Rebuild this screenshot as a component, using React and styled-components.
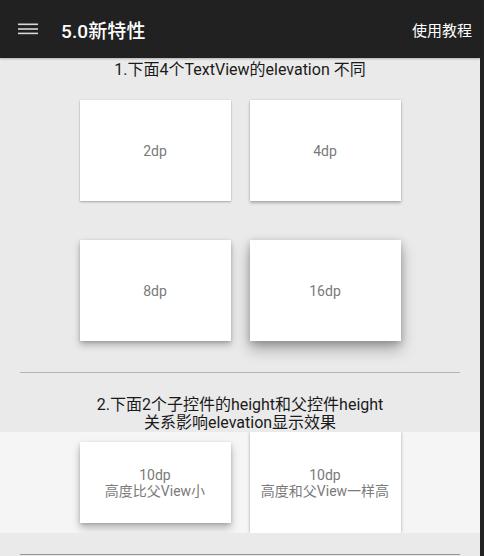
import React from "react";
import styled, { createGlobalStyle } from "styled-components";

const Global = createGlobalStyle`
  html, body { margin: 0; padding: 0; background: #222222; }
  body { font-family: Roboto, "Noto Sans CJK SC", sans-serif; }
  * { box-sizing: border-box; }
`;

const Page = styled.div`
  width: 480px;
  min-height: 100vh;
  background: #eaeaea;
  display: flex;
  flex-direction: column;
`;

const Toolbar = styled.header`
  height: 58px;
  background: #212121;
  display: flex;
  align-items: center;
  padding: 0 8px 0 18px;
  color: #ffffff;
  box-shadow: 0 1px 2px rgba(0, 0, 0, 0.25);
  position: relative;
  z-index: 1;
`;

const MenuIcon = styled.svg`
  width: 20px;
  height: 14px;
  flex: none;
`;

const Title = styled.h1`
  margin: 0 0 0 23px;
  font-size: 19px;
  font-weight: 500;
  flex: 1;
  letter-spacing: 0.1px;
`;

const Action = styled.span`
  font-size: 15px;
  font-weight: 400;
`;

const SectionTitle = styled.div`
  margin-top: ${(p) => p.$top}px;
  font-size: 16px;
  line-height: 18px;
  color: #1a1a1a;
  text-align: center;
`;

const CardGrid = styled.div`
  display: grid;
  grid-template-columns: 151px 151px;
  column-gap: 19px;
  row-gap: 39px;
  justify-content: center;
  margin-top: 21px;
`;

const shadows = {
  2: "0 1px 2px rgba(0,0,0,0.28), 0 0 1px rgba(0,0,0,0.12)",
  4: "0 2px 3px rgba(0,0,0,0.26), 0 0 2px rgba(0,0,0,0.14)",
  8: "0 4px 7px rgba(0,0,0,0.26), 0 1px 3px rgba(0,0,0,0.16)",
  10: "0 5px 8px rgba(0,0,0,0.26), 0 1px 3px rgba(0,0,0,0.16)",
  16: "0 8px 14px rgba(0,0,0,0.3), 0 2px 7px rgba(0,0,0,0.2)",
  side: "0 0 3px rgba(0,0,0,0.32)",
};

const Card = styled.div`
  background: #ffffff;
  height: ${(p) => (p.$h ? `${p.$h}px` : "auto")};
  align-self: ${(p) => (p.$stretch ? "stretch" : "center")};
  box-shadow: ${(p) => shadows[p.$elev]};
  display: flex;
  flex-direction: column;
  align-items: center;
  justify-content: center;
  color: #7a7a7a;
  font-size: 14px;
  line-height: 16px;
  text-align: center;
`;

const Divider = styled.div`
  height: 1px;
  margin: ${(p) => p.$top}px 20px 0;
  background: ${(p) => p.$color};
`;

const ParentView = styled.div`
  height: 101px;
  background: #f5f5f5;
  display: grid;
  grid-template-columns: 151px 151px;
  column-gap: 19px;
  justify-content: center;
  overflow: hidden;
`;

const Menu = () => (
  <MenuIcon viewBox="0 0 20 14">
    <rect x="0" y="1.5" width="20" height="1.6" fill="#d8d8d8" />
    <rect x="0" y="6.2" width="20" height="1.6" fill="#d8d8d8" />
    <rect x="0" y="10.6" width="20" height="1.6" fill="#d8d8d8" />
  </MenuIcon>
);

export default function App() {
  return (
    <>
      <Global />
      <Page>
        <Toolbar>
          <Menu />
          <Title>5.0新特性</Title>
          <Action>使用教程</Action>
        </Toolbar>
        <SectionTitle $top={3}>1.下面4个TextView的elevation 不同</SectionTitle>
        <CardGrid>
          <Card $h={101} $elev={2}>2dp</Card>
          <Card $h={101} $elev={4}>4dp</Card>
          <Card $h={101} $elev={8}>8dp</Card>
          <Card $h={101} $elev={16}>16dp</Card>
        </CardGrid>
        <Divider $top={31} $color="#b4b4b4" />
        <SectionTitle $top={23}>
          2.下面2个子控件的height和父控件height
          <br />
          关系影响elevation显示效果
        </SectionTitle>
        <ParentView>
          <Card $h={81} $elev={10}>
            10dp
            <br />
            高度比父View小
          </Card>
          <Card $stretch $elev="side">
            10dp
            <br />
            高度和父View一样高
          </Card>
        </ParentView>
        <Divider $top={21} $color="#959595" />
      </Page>
    </>
  );
}
